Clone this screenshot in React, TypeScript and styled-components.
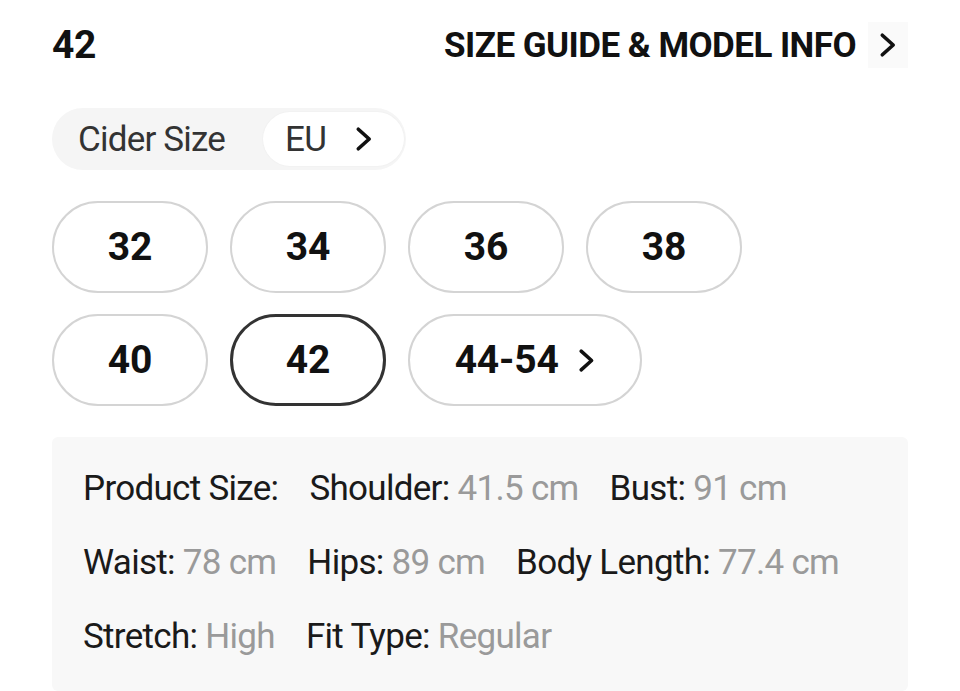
import React from "react";
import styled, { createGlobalStyle } from "styled-components";

const Global = createGlobalStyle`
  html, body { margin: 0; padding: 0; background: #fff; }
  body { font-family: Roboto, "Liberation Sans", Arial, sans-serif; color: #111; }
`;

const Page = styled.div`
  width: 960px;
  box-sizing: border-box;
  padding: 22px 52px 0 52px;
  display: flex;
  flex-direction: column;
`;

const Header = styled.div`
  display: flex;
  align-items: center;
  justify-content: space-between;
  height: 46px;
`;

const SelectedSize = styled.div`
  font-size: 39px;
  font-weight: 700;
  letter-spacing: -0.3px;
  color: #111;
`;

const GuideLink = styled.div`
  display: flex;
  align-items: center;
  gap: 12px;
  font-size: 35px;
  font-weight: 700;
  letter-spacing: -0.55px;
  color: #111;
`;

const ChevronBox = styled.span`
  display: flex;
  align-items: center;
  justify-content: center;
  width: 40px;
  height: 46px;
  background: #fafafa;
`;

const CiderPill = styled.div`
  margin-top: 40px;
  align-self: flex-start;
  display: flex;
  align-items: center;
  gap: 38px;
  height: 62px;
  padding: 0 2px 0 26px;
  background: #f5f5f5;
  border-radius: 31px;
  font-size: 35px;
  letter-spacing: -0.8px;
  color: #333;
`;

const UnitPill = styled.div`
  display: flex;
  align-items: center;
  gap: 28px;
  height: 54px;
  padding: 0 30px 0 22px;
  background: #fff;
  border-radius: 27px;
  box-shadow: 0 0 2px rgba(0, 0, 0, 0.05);
`;

const SizeGrid = styled.div`
  margin-top: 31px;
  display: flex;
  flex-wrap: wrap;
  gap: 21px 22px;
  max-width: 700px;
`;

const SizeButton = styled.div<{ $selected?: boolean; $wide?: boolean }>`
  box-sizing: border-box;
  width: ${(p) => (p.$wide ? "234px" : "156px")};
  height: 92px;
  border-radius: 46px;
  border: ${(p) => (p.$selected ? "3px solid #333" : "2px solid #d4d4d4")};
  display: flex;
  align-items: center;
  justify-content: center;
  gap: 18px;
  font-size: 39px;
  font-weight: 700;
  letter-spacing: -0.2px;
  color: #111;
  background: #fff;
`;

const InfoBox = styled.div`
  margin-top: 31px;
  background: #f8f8f8;
  border-radius: 6px;
  padding: 30px 31px 32px 31px;
  display: flex;
  flex-direction: column;
  gap: 30px;
`;

const InfoRow = styled.div`
  display: flex;
  flex-wrap: wrap;
  column-gap: 31px;
  line-height: 44px;
  font-size: 35px;
  letter-spacing: -0.7px;
`;

const Label = styled.span`
  color: #1a1a1a;
`;

const Value = styled.span`
  color: #9a9a9a;
`;

const Chevron = ({ size = 24 }: { size?: number }) => (
  <svg width={size * 0.75} height={size} viewBox="0 0 18 24" fill="none">
    <polyline
      points="4,3 14,12 4,21"
      stroke="#111"
      strokeWidth="3.4"
      strokeLinecap="round"
      strokeLinejoin="round"
    />
  </svg>
);

type Item = { label: string; value?: string };

const rows: Item[][] = [
  [
    { label: "Product Size:" },
    { label: "Shoulder:", value: "41.5 cm" },
    { label: "Bust:", value: "91 cm" },
  ],
  [
    { label: "Waist:", value: "78 cm" },
    { label: "Hips:", value: "89 cm" },
    { label: "Body Length:", value: "77.4 cm" },
  ],
  [
    { label: "Stretch:", value: "High" },
    { label: "Fit Type:", value: "Regular" },
  ],
];

const sizes = ["32", "34", "36", "38", "40", "42"];

export default function App() {
  return (
    <>
      <Global />
      <Page>
        <Header>
          <SelectedSize>42</SelectedSize>
          <GuideLink>
            SIZE GUIDE &amp; MODEL INFO
            <ChevronBox>
              <Chevron size={26} />
            </ChevronBox>
          </GuideLink>
        </Header>
        <CiderPill>
          <span>Cider Size</span>
          <UnitPill>
            <span>EU</span>
            <Chevron size={26} />
          </UnitPill>
        </CiderPill>
        <SizeGrid>
          {sizes.map((s) => (
            <SizeButton key={s} $selected={s === "42"}>
              {s}
            </SizeButton>
          ))}
          <SizeButton $wide>
            44-54
            <Chevron size={25} />
          </SizeButton>
        </SizeGrid>
        <InfoBox>
          {rows.map((row, i) => (
            <InfoRow key={i}>
              {row.map((it) => (
                <span key={it.label}>
                  <Label>{it.label}</Label>
                  {it.value && <Value> {it.value}</Value>}
                </span>
              ))}
            </InfoRow>
          ))}
        </InfoBox>
      </Page>
    </>
  );
}
